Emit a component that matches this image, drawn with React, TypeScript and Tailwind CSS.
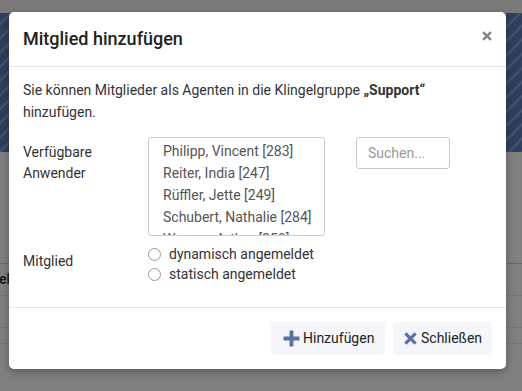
import { useState } from 'react'

const users = [
  'Philipp, Vincent [283]',
  'Reiter, India [247]',
  'Rüffler, Jette [249]',
  'Schubert, Nathalie [284]',
  'Wagner, Arthur [250]',
]

function PlusIcon() {
  return (
    <svg width="17" height="17" viewBox="0 0 16 16" className="shrink-0">
      <path d="M8 0.5v15M0.5 8h15" stroke="#5a6ea8" strokeWidth="3.6" />
    </svg>
  )
}

function XIcon({ color = '#5a6ea8', size = 13, width = 3 }: { color?: string; size?: number; width?: number }) {
  return (
    <svg width={size} height={size} viewBox="0 0 14 14" className="shrink-0">
      <path d="M1.5 1.5l11 11M12.5 1.5l-11 11" stroke={color} strokeWidth={width} />
    </svg>
  )
}

export default function App() {
  const [mode, setMode] = useState<string | null>(null)

  return (
    <div className="relative w-[522px] h-[391px] overflow-hidden bg-[#808080] font-['Roboto',sans-serif] text-[14px] text-[#333]">
      {/* Seite hinter dem Overlay */}
      <div className="h-[13px] bg-[#7a7a7a]" />
      <div className="h-[139px] bg-[#2e3f5e] bg-[repeating-linear-gradient(135deg,rgba(255,255,255,0)_0px,rgba(255,255,255,0)_6px,rgba(255,255,255,0.12)_8px,rgba(255,255,255,0)_10px)]" />
      <div className="h-[111px]" />
      <div className="h-[32px] border-t border-[#6a6a6a] flex items-center">
        <span className="font-bold text-[#222] -ml-[1px]">ell</span>
      </div>
      <div className="h-[32px] border-t border-[#747474]" />
      <div className="h-[16px] border-t border-[#747474]" />
      <div className="border-t border-[#747474]" />

      {/* Modal */}
      <div className="absolute left-[9px] top-[12px] w-[497px] h-[357px] bg-white rounded-[5px] shadow-[0_3px_9px_rgba(0,0,0,0.3)] flex flex-col">
        <div className="h-[55px] px-[14px] flex items-center justify-between border-b border-[#e5e5e5]">
          <h4 className="text-[18px] font-medium text-[#222] leading-none">Mitglied hinzufügen</h4>
          <button className="mr-[0px] -mt-[6px]">
            <XIcon color="#858585" size={10} width={3.4} />
          </button>
        </div>

        <div className="flex-1 px-[14px] pt-[12px]">
          <p className="leading-[22px]">
            Sie können Mitglieder als Agenten in die Klingelgruppe <strong className="font-bold">„Support“</strong> hinzufügen.
          </p>

          <div className="flex mt-[14px]">
            <div className="w-[125px] pt-[5px] leading-[21px]">
              Verfügbare
              <br />
              Anwender
            </div>
            <div className="w-[177px] h-[99px] border border-[#ccc] rounded-[3px] overflow-hidden pt-[2px] pl-[14px] text-[#555]">
              {users.map((u) => (
                <div key={u} className="leading-[22px] whitespace-nowrap">
                  {u}
                </div>
              ))}
            </div>
            <div className="ml-[31px] w-[94px] h-[32px] border border-[#ccc] rounded-[3px] flex items-center px-[11px] text-[#999]">
              Suchen...
            </div>
          </div>

          <div className="flex mt-[8px]">
            <div className="w-[125px] pt-[7px] leading-[20px]">Mitglied</div>
            <div className="flex flex-col">
              {['dynamisch angemeldet', 'statisch angemeldet'].map((m) => (
                <label key={m} className="flex items-center h-[20px] cursor-pointer" onClick={() => setMode(m)}>
                  <span className="w-[13px] h-[13px] rounded-full border border-[#9a9a9a] bg-white mr-[8px] flex items-center justify-center">
                    {mode === m && <span className="w-[7px] h-[7px] rounded-full bg-[#333]" />}
                  </span>
                  {m}
                </label>
              ))}
            </div>
          </div>
        </div>

        <div className="h-[62px] border-t border-[#e5e5e5] flex items-center justify-end gap-[8px] px-[14px]">
          <button className="h-[33px] w-[114px] pl-[12px] rounded-[4px] bg-[#f4f6f9] flex items-center gap-[3px] text-[#222]">
            <PlusIcon />
            Hinzufügen
          </button>
          <button className="h-[33px] w-[99px] pl-[11px] rounded-[4px] bg-[#f4f6f9] flex items-center gap-[4px] text-[#222]">
            <XIcon size={13} width={3.4} />
            Schließen
          </button>
        </div>
      </div>
    </div>
  )
}
